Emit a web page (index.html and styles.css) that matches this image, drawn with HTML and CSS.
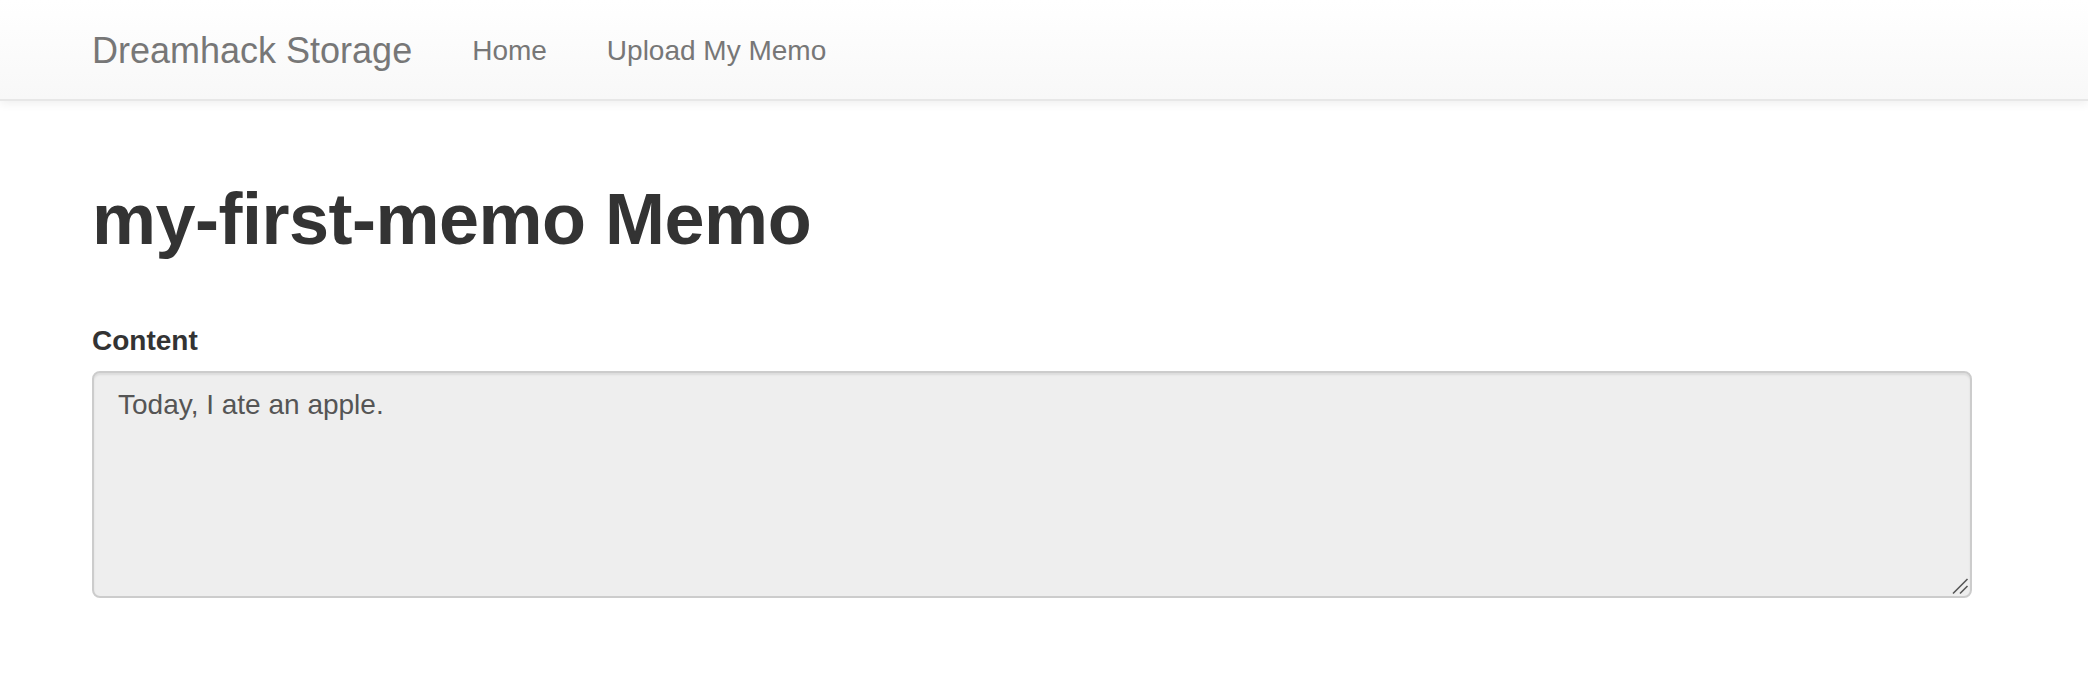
FILE: index.html
```html
<!DOCTYPE html>
<html lang="en">
<head>
<meta charset="utf-8">
<title>Dreamhack Storage</title>
<link rel="stylesheet" href="styles.css">
</head>
<body>
<nav class="navbar">
  <div class="nav-inner">
    <a class="brand" href="#">Dreamhack Storage</a>
    <a class="nav-link" href="#">Home</a>
    <a class="nav-link" href="#">Upload My Memo</a>
  </div>
</nav>
<main class="container">
  <h1 class="title">my-first-memo Memo</h1>
  <div class="form-group">
    <label class="label" for="content">Content</label>
    <div class="box-wrap">
      <textarea id="content" class="content-box" readonly>Today, I ate an apple.</textarea>
      <svg class="grip" width="18" height="18" viewBox="0 0 18 18" aria-hidden="true">
        <line x1="2" y1="16.5" x2="16.5" y2="2" stroke="#555" stroke-width="1.6"/>
        <line x1="9" y1="16.5" x2="16.5" y2="9" stroke="#555" stroke-width="1.6"/>
      </svg>
    </div>
  </div>
</main>
</body>
</html>
```
FILE: styles.css
```css
html, body {
  margin: 0;
  padding: 0;
  background: #fff;
}
body {
  font-family: "Liberation Sans", Arial, Helvetica, sans-serif;
  color: #333;
}
.navbar {
  box-sizing: border-box;
  height: 101px;
  border-bottom: 2px solid #e7e7e7;
  background: linear-gradient(to bottom, #ffffff 0%, #f8f8f8 100%);
  box-shadow: 0 2px 10px rgba(0, 0, 0, 0.075);
}
.nav-inner {
  display: flex;
  align-items: flex-start;
  padding-left: 62px;
}
.brand {
  padding: 30px;
  padding-top: 31px;
  font-size: 36px;
  line-height: 40px;
  color: #777;
  text-decoration: none;
}
.nav-link {
  padding: 30px;
  padding-top: 31px;
  font-size: 28px;
  line-height: 40px;
  color: #777;
  text-decoration: none;
}
.container {
  width: 1880px;
  padding-left: 92px;
}
.title {
  margin: 79px 0 62px;
  font-size: 72px;
  line-height: 79px;
  font-weight: bold;
  letter-spacing: -0.5px;
  color: #333;
}
.form-group {
  display: flex;
  flex-direction: column;
}
.label {
  display: block;
  margin-bottom: 10px;
  font-size: 28px;
  line-height: 40px;
  font-weight: bold;
  color: #333;
}
.box-wrap {
  position: relative;
  width: 1880px;
}
.content-box {
  display: block;
  box-sizing: border-box;
  width: 1880px;
  height: 227px;
  margin: 0;
  padding: 12px 24px;
  border: 2px solid #ccc;
  border-radius: 8px;
  background: #eee;
  color: #555;
  font-family: "Liberation Sans", Arial, Helvetica, sans-serif;
  font-size: 28px;
  line-height: 40px;
  box-shadow: inset 0 2px 2px rgba(0, 0, 0, 0.075);
  outline: none;
  resize: none;
}
.grip {
  position: absolute;
  right: 3px;
  bottom: 3px;
}
```
